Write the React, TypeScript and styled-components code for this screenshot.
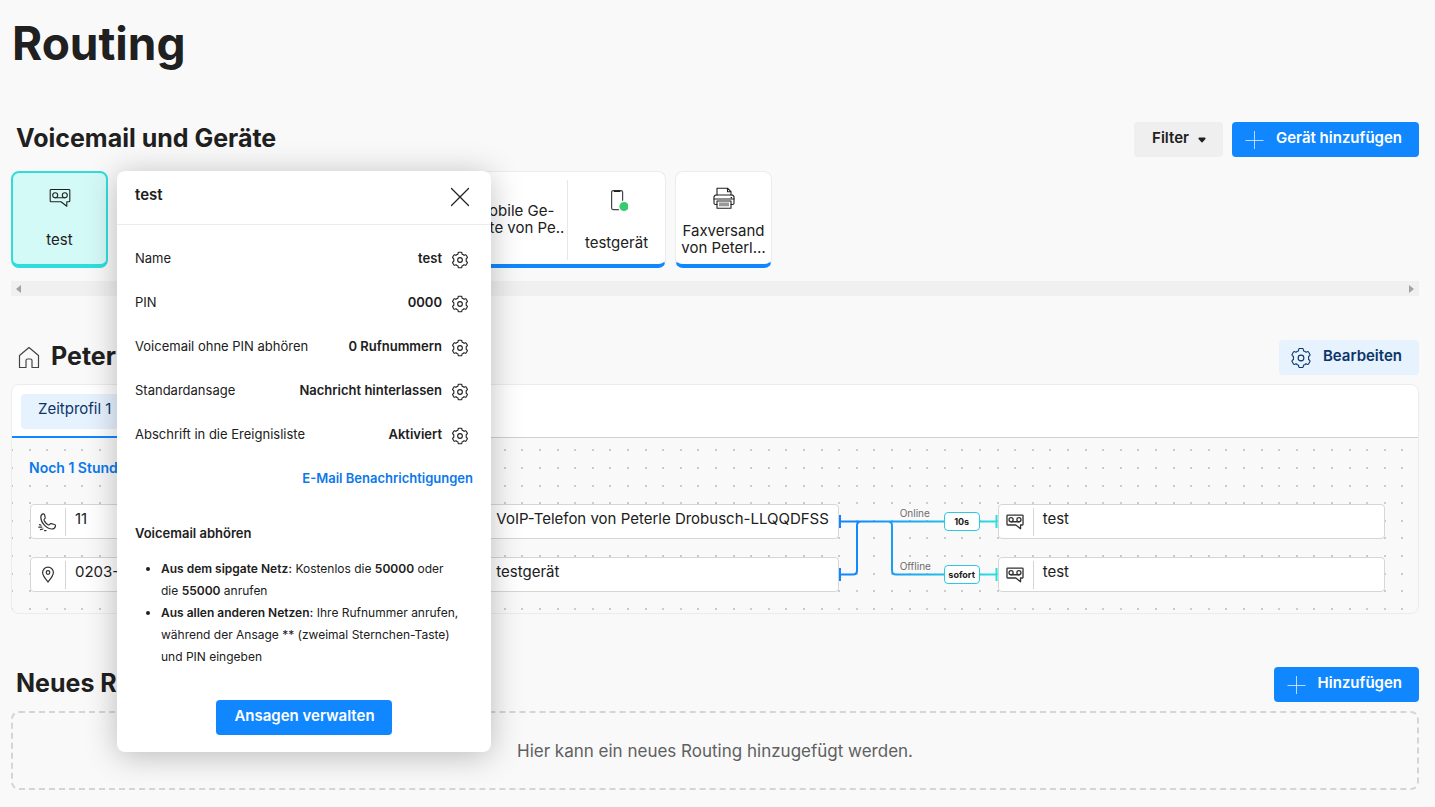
import React from "react";
import styled, { createGlobalStyle, css } from "styled-components";

const GlobalStyle = createGlobalStyle`
  *, *::before, *::after { box-sizing: border-box; }
  body {
    margin: 0;
    background: #f9f9f9;
    color: #202020;
    font-family: Inter, "Liberation Sans", sans-serif;
    font-size: 15px;
  }
  button { font: inherit; color: inherit; border: 0; background: none; padding: 0; cursor: pointer; }
  h1, h2, h3, p, ul, dl, dd { margin: 0; padding: 0; }
  svg { display: block; flex: none; }
`;

const blue = "#1187ff";
const teal = "#2fdedb";

const Page = styled.main`
  padding: 0 16px 16px 11px;
`;

const Title = styled.h1`
  font-size: 46px;
  line-height: 58px;
  font-weight: 700;
  padding: 14px 0 50px 1px;
`;

const SectionHead = styled.header`
  display: flex;
  align-items: center;
  justify-content: space-between;
  height: 35px;
`;

const SectionTitle = styled.h2`
  display: flex;
  align-items: center;
  gap: 10px;
  padding-left: 5px;
  font-size: 25px;
  line-height: 33px;
  font-weight: 700;
  padding-bottom: 2px;
`;

const Actions = styled.div`
  display: flex;
  gap: 9px;
`;

const tones = {
  primary: css`background: ${blue}; color: #fff;`,
  soft: css`background: #e7f2ff; color: #0b3567;`,
  neutral: css`background: #efefef; color: #202020;`,
};

const Button = styled.button<{ $tone: keyof typeof tones; $icon?: boolean }>`
  display: inline-flex;
  align-items: center;
  gap: ${(p) => (p.$icon ? 11 : 9)}px;
  height: 35px;
  padding: 0 17px 0 ${(p) => (p.$icon ? 11 : 18)}px;
  border-radius: 4px;
  font-size: 15px;
  line-height: 20px;
  font-weight: 600;
  white-space: nowrap;
  ${(p) => tones[p.$tone]}
  span { padding-bottom: 4px; }
`;

const DeviceSection = styled.section`
  position: relative;
  margin-top: 14px;
`;

const DeviceList = styled.div`
  display: flex;
  gap: 9px;
  height: 97px;
`;

const Tile = styled.button<{ $active?: boolean }>`
  display: flex;
  flex-direction: column;
  align-items: center;
  justify-content: space-between;
  width: 97px;
  padding: 15px 2px 8px;
  border: 1px solid #ececec;
  border-bottom: 4px solid ${blue};
  border-radius: 8px;
  background: #fff;
  line-height: 17px;
  ${(p) =>
    p.$active &&
    css`
      border: 2px solid ${teal};
      border-bottom-width: 4px;
      padding: 14px 2px 16px;
      background: #d4faf7;
    `}
`;

const TileGroup = styled.div`
  display: flex;
  justify-content: flex-end;
  width: 549px;
  padding: 8px 0 4px;
  border: 1px solid #ececec;
  border-bottom: 4px solid ${blue};
  border-radius: 8px;
  background: #fff;
`;

const GroupCell = styled.button<{ $text?: boolean }>`
  display: flex;
  flex-direction: column;
  align-items: center;
  justify-content: ${(p) => (p.$text ? "center" : "space-between")};
  width: 98px;
  padding: ${(p) => (p.$text ? "0 0 3px 4px" : "9px 0 9px")};
  border-left: ${(p) => (p.$text ? "0" : "1px solid #e8e8e8")};
  line-height: 17px;
  text-align: left;
  white-space: nowrap;
`;

const ScrollTrack = styled.div`
  display: flex;
  align-items: center;
  justify-content: space-between;
  height: 15px;
  margin-top: 13px;
  padding: 0 5px;
  background: #f0f0f0;
`;

const Popover = styled.div`
  position: absolute;
  top: 0;
  left: 106px;
  z-index: 2;
  width: 374px;
  height: 581px;
  border-radius: 8px;
  background: #fff;
  box-shadow: 0 4px 32px rgba(0, 0, 0, 0.25);
  font-size: 13px;
  line-height: 22px;
`;

const PopoverHead = styled.header`
  display: flex;
  align-items: center;
  justify-content: space-between;
  height: 54px;
  padding: 0 21px 2px 18px;
  border-bottom: 1px solid #ececec;
  h3 { font-size: 15px; font-weight: 600; line-height: 20px; padding-bottom: 3px; }
`;

const PopoverBody = styled.div`
  display: flex;
  flex-direction: column;
  padding: 13px 18px 0;
`;

const Setting = styled.div`
  display: flex;
  align-items: center;
  height: 44px;
  dt { flex: 1; }
  dd { display: flex; align-items: center; gap: 9px; padding-right: 4px; font-weight: 600; }
  span, dt { padding-bottom: 4px; }
`;

const MailLink = styled.a`
  align-self: flex-end;
  padding: 9px 0 13px;
  color: #0a78ea;
  font-weight: 600;
  text-decoration: none;
`;

const HelpTitle = styled.h3`
  margin: 20px 0 14px;
  font-size: 13px;
  line-height: 22px;
  font-weight: 600;
`;

const HelpList = styled.ul`
  padding: 0 10px 0 26px;
  font-size: 12px;
  b { font-weight: 600; }
`;

const PopoverFoot = styled.footer`
  display: flex;
  justify-content: center;
  margin-top: 32px;
`;

const RoutingSection = styled.section`
  margin-top: 44px;
`;

const Panel = styled.div`
  margin-top: 9px;
  border: 1px solid #ececec;
  border-radius: 8px;
  overflow: hidden;
`;

const Tabs = styled.div`
  display: flex;
  height: 53px;
  background: #fff;
  box-shadow: inset 0 -1px #d0d0d0;
`;

const TabSlot = styled.div`
  padding: 9px 9px 7px;
  border-bottom: 2px solid ${blue};
`;

const Tab = styled.button`
  height: 35px;
  padding: 0 18px 6px 17px;
  border-radius: 4px;
  background: #e7f2ff;
  color: #0b3567;
`;

const Canvas = styled.div`
  position: relative;
  height: 175px;
  padding: 13px 33px 0 17px;
`;

const DotGrid = styled.svg`
  position: absolute;
  inset: 0;
  width: 100%;
  height: 100%;
`;

const Status = styled.p`
  position: relative;
  width: 240px;
  height: 34px;
  background: #f9f9f9;
  color: #0a78ea;
  font-size: 14px;
  line-height: 33px;
  font-weight: 600;
`;

const Flow = styled.div`
  position: relative;
  display: grid;
  grid-template-columns: 1fr 34px 1fr 159px 1fr;
  margin-top: 19px;
  padding-left: 1px;
`;

const Stack = styled.div`
  display: flex;
  flex-direction: column;
  gap: 18px;
`;

const Node = styled.button`
  display: flex;
  align-items: center;
  height: 35px;
  border: 1px solid #d6d6d6;
  border-radius: 4px;
  background: #fff;
  text-align: left;
  white-space: nowrap;
`;

const NodeIcon = styled.span`
  display: flex;
  align-items: center;
  justify-content: center;
  width: 35px;
  height: 28px;
  padding-right: 1px;
  border-right: 1px solid #d6d6d6;
  color: #333;
`;

const NodeLabel = styled.span`
  padding: 0 0 6px 9px;
`;

const Connector = styled.div`
  position: relative;
`;

const Links = styled.svg`
  width: 159px;
  height: 88px;
`;

const Branch = styled.span<{ $row: number }>`
  position: absolute;
  left: 61px;
  top: ${(p) => 3 + p.$row * 53}px;
  color: #6c6c6c;
  font-size: 10px;
  line-height: 13px;
`;

const Delay = styled.button<{ $row: number }>`
  position: absolute;
  left: 105px;
  top: ${(p) => 8 + p.$row * 53}px;
  width: 36px;
  height: 19px;
  border: 1px solid #2cc9e2;
  border-radius: 4px;
  background: #fff;
  font-size: 9px;
  line-height: 16px;
  font-weight: 700;
`;

const NewSection = styled.section`
  margin-top: 53px;
`;

const DropZone = styled.div`
  display: flex;
  align-items: center;
  justify-content: center;
  height: 79px;
  margin-top: 9px;
  border: 2px dashed #d5d5d5;
  border-radius: 8px;
  color: #606060;
  font-size: 17px;
`;

const line = { fill: "none", stroke: "currentColor", strokeLinejoin: "round", strokeLinecap: "round" } as const;

const VoicemailIcon = ({ size = 22, weight = 1.1 }: { size?: number; weight?: number }) => (
  <svg width={size} height={size} viewBox="0 0 22 22" {...line} strokeWidth={weight}>
    <path d="M2 2.5h18q.8 0 .8.8v10.6q0 .8-.8.8h-2.2v4.6l-5.8-4.6H2q-.8 0-.8-.8V3.300q0-.8.8-.8z" />
    <circle cx="6.200" cy="8.200" r="2.500" />
    <circle cx="15.800" cy="8.200" r="2.500" />
    <path d="M6.200 10.700h9.600" />
  </svg>
);

const gearPath = (() => {
  const at = (deg: number, r: number) => {
    const a = (deg * Math.PI) / 180;
    return `${(12 + r * Math.cos(a)).toFixed(2)} ${(12 + r * Math.sin(a)).toFixed(2)}`;
  };
  let d = "";
  for (let k = 0; k < 6; k++) {
    const c = -90 + k * 60;
    d += `${k ? "L" : "M"}${at(c - 15, 10.6)}Q${at(c - 13, 11.4)} ${at(c - 10, 11.4)}L${at(c + 10, 11.4)}Q${at(c + 13, 11.4)} ${at(c + 15, 10.6)}`;
    d += `Q${at(c + 18, 8.2)} ${at(c + 30, 9.2)}Q${at(c + 42, 8.2)} ${at(c + 45, 10.6)}`;
  }
  return d + "Z";
})();

const GearIcon = ({ size = 18, weight = 1.6 }: { size?: number; weight?: number }) => (
  <svg width={size} height={size} viewBox="-1 -1 26 26" {...line} strokeWidth={weight}>
    <path d={gearPath} />
    <circle cx="12" cy="12" r="3.400" />
  </svg>
);

const PlusIcon = () => (
  <svg width="22" height="22" viewBox="0 0 22 22" {...line} strokeLinecap="butt" strokeOpacity="0.7">
    <path d="M11.500 2v18M2.500 11.500h18" />
  </svg>
);

const MobileIcon = () => (
  <svg width="22" height="24" viewBox="0 0 22 24" {...line} stroke="#444" strokeWidth="1.200">
    <rect x="5.600" y="1.600" width="11" height="19" rx="1.500" />
    <path d="M8.600 2.200h5" stroke="#202020" strokeWidth="1.800" />
    <circle cx="18" cy="17.500" r="6" fill="#fff" stroke="none" />
    <circle cx="18" cy="17.500" r="4.600" fill="#37cb70" stroke="none" />
  </svg>
);

const FaxIcon = () => (
  <svg width="22" height="22" viewBox="0 0 22 22" {...line} strokeWidth="1.100">
    <path d="M4 8V1.200h10.500l3.500 3.500V8M14.500 1.200v3.500H18" />
    <path d="M4 17.500H2.500q-1.500 0-1.500-1.500V9.500L2.500 8h17L21 9.500V16q0 1.500-1.500 1.500H18" />
    <path d="M4 14h14v7.200H4zM1 12h20M18 10.600h.6" />
    <path d="M6 15.500h10v3.800H6z" fill="#999" stroke="none" />
  </svg>
);

const HomeIcon = () => (
  <svg width="25" height="24" viewBox="0 0 25 24" {...line} stroke="#444" strokeWidth="1.200">
    <path d="M3.500 10.500 13 2.500 22.500 10.500v12H16v-7q0-1.500-1.500-1.500h-3q-1.500 0-1.500 1.500v7H3.500z" />
  </svg>
);

const PhoneIcon = () => (
  <svg width="20" height="20" viewBox="0 0 20 20" {...line} strokeWidth="1.200">
    <path d="M2.800 5.200c0-1.800 1-2.900 2.300-3.300.8-.2 1.300.2 1.500 1l.6 2.400c.2.900-.1 1.300-.8 1.800-.5.400-.5.900-.2 1.500.9 1.700 2.300 3.300 3.900 4.200.6.300 1.100.3 1.500-.3.500-.7 1-1 1.800-.8l3 .8c.9.200 1.300.8 1.100 1.600-.4 1.700-1.600 2.900-3.400 2.900C8.500 17 2.800 10.600 2.800 5.200z" />
    <path d="M1.500 12.600l1.500.6M.8 15.200h3M2.400 17.600l2.600-.6M6.500 18.600h1.500" />
  </svg>
);

const PinIcon = () => (
  <svg width="20" height="20" viewBox="0 0 20 20" {...line} strokeWidth="1.200">
    <path d="M10 17C7 13.500 4.600 10.800 4.600 7.600a5.400 5.400 0 0 1 10.800 0c0 3.200-2.400 5.900-5.400 9.400z" />
    <circle cx="10" cy="7.500" r="1.800" />
  </svg>
);

const CloseIcon = () => (
  <svg width="20" height="20" viewBox="0 0 20 20" {...line} strokeWidth="1.200">
    <path d="M1.500 1.500l17 17M18.500 1.500l-17 17" />
  </svg>
);

const settings = [
  ["Name", "test"],
  ["PIN", "0000"],
  ["Voicemail ohne PIN abhören", "0 Rufnummern"],
  ["Standardansage", "Nachricht hinterlassen"],
  ["Abschrift in die Ereignisliste", "Aktiviert"],
];

const FlowNode = ({ icon, label }: { icon?: React.ReactNode; label: string }) => (
  <Node>
    <NodeIcon>{icon}</NodeIcon>
    <NodeLabel>{label}</NodeLabel>
  </Node>
);

const dotX = [0, 17, 35, 52, 70];
const dotY = [0, 18, 36, 53, 71];

const Dots = () => (
  <DotGrid aria-hidden="true">
    <defs>
      <pattern id="dots" x="17" y="11" width="88" height="88" patternUnits="userSpaceOnUse">
        {dotX.map((x) => dotY.map((y) => <rect key={`${x}-${y}`} x={x} y={y} width="2" height="2" fill="#cbcbcb" />))}
      </pattern>
    </defs>
    <rect width="100%" height="100%" fill="url(#dots)" />
  </DotGrid>
);

const VoicemailPopover = () => (
  <Popover role="dialog" aria-label="test">
    <PopoverHead>
      <h3>test</h3>
      <button aria-label="Schließen"><CloseIcon /></button>
    </PopoverHead>
    <PopoverBody>
      <dl>
        {settings.map(([name, value]) => (
          <Setting key={name}>
            <dt>{name}</dt>
            <dd>
              <span>{value}</span>
              <button aria-label={`${name} bearbeiten`}><GearIcon /></button>
            </dd>
          </Setting>
        ))}
      </dl>
      <MailLink href="#benachrichtigungen">E-Mail Benachrichtigungen</MailLink>
      <HelpTitle>Voicemail abhören</HelpTitle>
      <HelpList>
        <li><b>Aus dem sipgate Netz:</b> Kostenlos die <b>50000</b> oder die <b>55000</b> anrufen</li>
        <li><b>Aus allen anderen Netzen:</b> Ihre Rufnummer anrufen, während der Ansage ** (zweimal Sternchen-Taste) und PIN eingeben</li>
      </HelpList>
      <PopoverFoot>
        <Button $tone="primary"><span>Ansagen verwalten</span></Button>
      </PopoverFoot>
    </PopoverBody>
  </Popover>
);

export default function App() {
  return (
    <>
      <GlobalStyle />
      <Page>
        <Title>Routing</Title>

        <SectionHead>
          <SectionTitle>Voicemail und Geräte</SectionTitle>
          <Actions>
            <Button $tone="neutral">
              <span>Filter</span>
              <svg width="8" height="6" viewBox="0 0 8 6" fill="currentColor">
                <path d="M.5 1.200Q.5.500 1.200.500h5.600q.7 0 .7.700v.8L4.500 5.300q-.5.500-1 0L.5 2z" />
              </svg>
            </Button>
            <Button $tone="primary" $icon><PlusIcon /><span>Gerät hinzufügen</span></Button>
          </Actions>
        </SectionHead>

        <DeviceSection>
          <DeviceList>
            <Tile $active><VoicemailIcon />test</Tile>
            <TileGroup>
              <GroupCell $text><span>Mobile Ge-<br />räte von Pe..</span></GroupCell>
              <GroupCell><MobileIcon />testgerät</GroupCell>
            </TileGroup>
            <Tile><FaxIcon /><span>Faxversand von Peterl…</span></Tile>
          </DeviceList>
          <ScrollTrack>
            <svg width="5" height="8" viewBox="0 0 5 8" fill="#a3a3a3"><path d="M5 0v8L0 4z" /></svg>
            <svg width="5" height="8" viewBox="0 0 5 8" fill="#a3a3a3"><path d="M0 0v8l5-4z" /></svg>
          </ScrollTrack>
          <VoicemailPopover />
        </DeviceSection>

        <RoutingSection>
          <SectionHead>
            <SectionTitle><HomeIcon />Peter</SectionTitle>
            <Button $tone="soft" $icon><GearIcon size={22} weight={1.3} /><span>Bearbeiten</span></Button>
          </SectionHead>
          <Panel>
            <Tabs>
              <TabSlot><Tab>Zeitprofil 1</Tab></TabSlot>
            </Tabs>
            <Canvas>
              <Dots />
              <Status>Noch 1 Stund</Status>
              <Flow>
                <Stack>
                  <FlowNode icon={<PhoneIcon />} label="11" />
                  <FlowNode icon={<PinIcon />} label="0203-" />
                </Stack>
                <span />
                <Stack>
                  <FlowNode label="VoIP-Telefon von Peterle Drobusch-LLQQDFSS" />
                  <FlowNode label="testgerät" />
                </Stack>
                <Connector>
                  <Links viewBox="0 0 159 88" fill="none" strokeWidth="2">
                    <defs>
                      <linearGradient id="link" gradientUnits="userSpaceOnUse" x1="0" y1="0" x2="159" y2="0">
                        <stop offset="0.100" stopColor={blue} />
                        <stop offset="1" stopColor={teal} />
                      </linearGradient>
                    </defs>
                    <g stroke="url(#link)">
                      <path d="M1 17.500H157v.01M1 70.500H14q4 0 4-4V21.500q0-4 4-4M49 17.500q4 0 4 4V66.500q0 4 4 4H157v.01" />
                    </g>
                    <path d="M1 11v13M1 64v13" stroke={blue} />
                    <path d="M157.500 11v13M157.500 64v13" stroke={teal} />
                  </Links>
                  <Branch $row={0}>Online</Branch>
                  <Branch $row={1}>Offline</Branch>
                  <Delay $row={0}>10s</Delay>
                  <Delay $row={1}>sofort</Delay>
                </Connector>
                <Stack>
                  <FlowNode icon={<VoicemailIcon size={18} weight={1.6} />} label="test" />
                  <FlowNode icon={<VoicemailIcon size={18} weight={1.6} />} label="test" />
                </Stack>
              </Flow>
            </Canvas>
          </Panel>
        </RoutingSection>

        <NewSection>
          <SectionHead>
            <SectionTitle>Neues Routing</SectionTitle>
            <Button $tone="primary" $icon><PlusIcon /><span>Hinzufügen</span></Button>
          </SectionHead>
          <DropZone>Hier kann ein neues Routing hinzugefügt werden.</DropZone>
        </NewSection>
      </Page>
    </>
  );
}
